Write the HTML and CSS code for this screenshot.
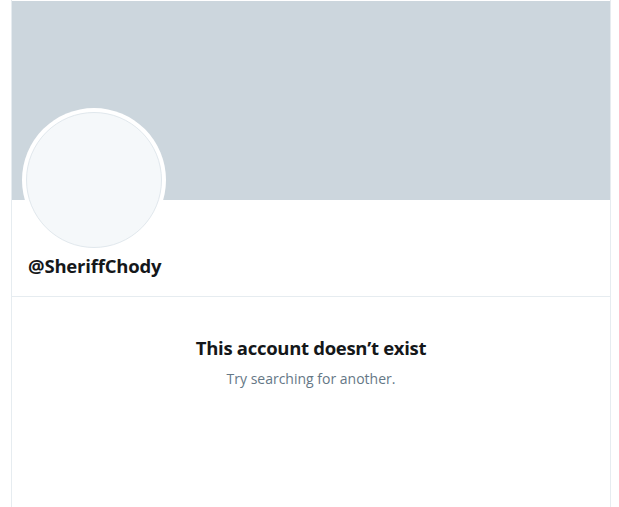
FILE: index.html
```html
<!DOCTYPE html>
<html lang="en">
<head>
  <meta charset="UTF-8"/>
  <title>@SheriffChody</title>
  <link rel="stylesheet" href="styles.css">
</head>
<body>
  <div class="profile">
    <div class="banner"></div>
    <div class="head">
      <div class="avatar"><div class="avatar-inner"></div></div>
      <div class="handle">@SheriffChody</div>
    </div>
    <div class="empty">
      <div class="title">This account doesn’t exist</div>
      <div class="hint">Try searching for another.</div>
    </div>
  </div>
</body>
</html>
```

FILE: styles.css
```css
body { margin:0; background:#fff; font-family:"Open Sans","Noto Sans",sans-serif; color:#14171a; }
.profile { width:598px; margin-left:11px; border-left:1px solid #e6ecf0; border-right:1px solid #e6ecf0; min-height:100vh; padding-top:1px; }
.banner { height:199px; background:#ccd6dd; }
.head { display:flex; flex-direction:column; align-items:flex-start; padding:0 0 0 10px; height:96px; border-bottom:1px solid #e6ecf0; }
.avatar { width:144px; height:144px; flex:none; border-radius:50%; background:#fff; margin-top:-92px; padding:4px; box-sizing:border-box; }
.avatar-inner { width:100%; height:100%; border-radius:50%; background:#f5f8fa; border:1px solid #e1e8ed; box-sizing:border-box; }
.handle { font-size:18.5px; font-weight:700; margin:2px 0 0 6px; line-height:24px; letter-spacing:-0.2px; }
.empty { text-align:center; padding-top:38px; }
.title { font-size:18.5px; font-weight:700; line-height:26px; letter-spacing:-0.3px; }
.hint { font-size:14px; color:#657786; margin-top:8px; line-height:20px; }
```
